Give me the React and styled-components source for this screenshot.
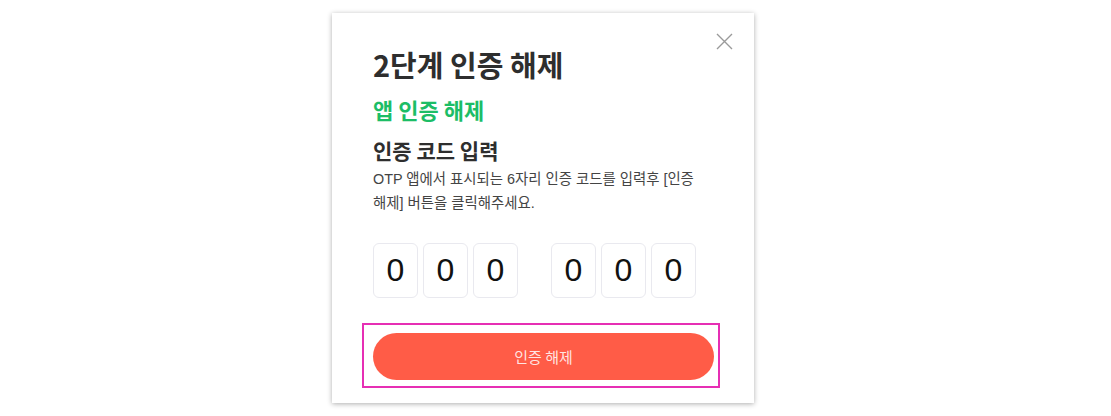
import React from "react";
import styled, { createGlobalStyle } from "styled-components";

const Global = createGlobalStyle`
  html, body { margin: 0; padding: 0; background: #fff; }
  body { font-family: "Liberation Sans", "Noto Sans CJK KR", sans-serif; }
  * { box-sizing: border-box; }
`;

const Page = styled.div`
  width: 1111px;
  height: 416px;
  padding: 13px 0 0 332px;
`;

const Card = styled.div`
  position: relative;
  width: 422px;
  height: 390px;
  background: #fff;
  box-shadow: 0 1px 5px rgba(0, 0, 0, 0.32);
  padding: 34px 40px 0 41px;
  display: flex;
  flex-direction: column;
`;

const CloseButton = styled.button`
  position: absolute;
  top: 18px;
  right: 20px;
  width: 20px;
  height: 20px;
  padding: 0;
  border: 0;
  background: none;
  display: flex;
  align-items: center;
  justify-content: center;
  cursor: pointer;
`;

const Title = styled.h1`
  margin: 0;
  font-family: "Noto Sans CJK KR", sans-serif;
  font-size: 29px;
  line-height: 34px;
  font-weight: 700;
  color: #2e2e2e;
`;

const SubTitle = styled.h2`
  margin: ${(p) => p.$mt || 0}px 0 0;
  font-family: "Noto Sans CJK KR", sans-serif;
  font-size: ${(p) => p.$size || 21}px;
  line-height: ${(p) => p.$lh || 28}px;
  font-weight: 700;
  color: ${(p) => p.$color || "#2e2e2e"};
`;

const Desc = styled.p`
  margin: 3px 0 0;
  font-size: 14.4px;
  line-height: 24px;
  color: #444;
  word-break: keep-all;
`;

const CodeRow = styled.div`
  margin-top: 28px;
  display: flex;
  gap: 33px;
`;

const CodeGroup = styled.div`
  display: flex;
  gap: 5px;
`;

const Digit = styled.div`
  width: 45px;
  height: 55px;
  border: 1px solid #e9e9ef;
  border-radius: 6px;
  display: flex;
  align-items: center;
  justify-content: center;
  font-family: "Liberation Sans", sans-serif;
  font-size: 32px;
  color: #111;
`;

const Highlight = styled.div`
  position: relative;
  margin-top: 35px;
  &::after {
    content: "";
    position: absolute;
    left: -11px;
    right: -6px;
    top: -10px;
    bottom: -8px;
    border: 2px solid #e62fb4;
    pointer-events: none;
  }
`;

const SubmitButton = styled.button`
  width: 341px;
  height: 47px;
  border: 0;
  border-radius: 24px;
  background: #ff5c47;
  color: rgba(255, 255, 255, 0.85);
  font-family: "Noto Sans CJK KR", sans-serif;
  font-size: 15px;
  display: block;
`;

export default function App() {
  const groups = [["0", "0", "0"], ["0", "0", "0"]];
  return (
    <Page>
      <Global />
      <Card>
        <CloseButton aria-label="close">
          <svg width="17" height="17" viewBox="0 0 17 17">
            <path d="M1 1 L16 16 M16 1 L1 16" stroke="#9a9a9a" strokeWidth="1.4" fill="none" />
          </svg>
        </CloseButton>
        <Title>2단계 인증 해제</Title>
        <SubTitle $color="#1cbd66" $size={22} $lh={30} $mt={13}>앱 인증 해제</SubTitle>
        <SubTitle $mt={12}>인증 코드 입력</SubTitle>
        <Desc>
          OTP 앱에서 표시되는 6자리 인증 코드를 입력후 [인증 해제] 버튼을 클릭해주세요.
        </Desc>
        <CodeRow>
          {groups.map((g, gi) => (
            <CodeGroup key={gi}>
              {g.map((d, i) => (
                <Digit key={i}>{d}</Digit>
              ))}
            </CodeGroup>
          ))}
        </CodeRow>
        <Highlight>
          <SubmitButton>인증 해제</SubmitButton>
        </Highlight>
      </Card>
    </Page>
  );
}
